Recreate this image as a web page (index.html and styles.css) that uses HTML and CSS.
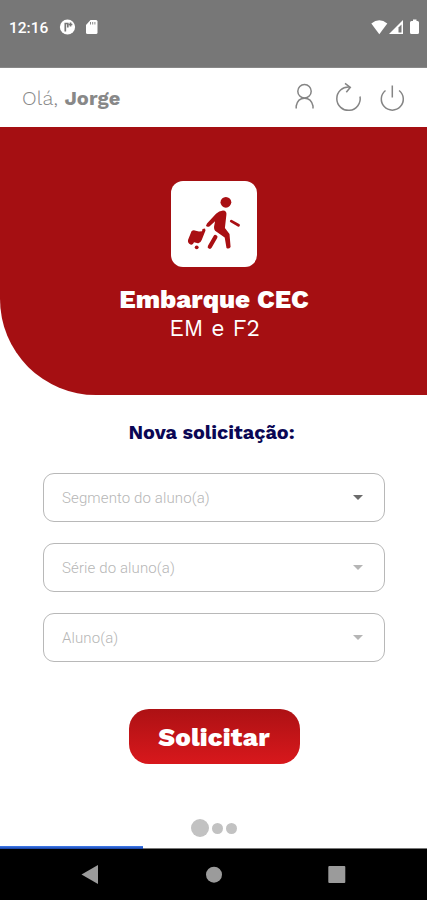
FILE: index.html
```html
<!DOCTYPE html>
<html lang="pt-BR">
<head>
<meta charset="utf-8">
<meta name="viewport" content="width=device-width, initial-scale=1">
<title>Embarque CEC</title>
<link rel="stylesheet" href="styles.css">
</head>
<body>
<div class="status">
  <span class="clock">12:16</span>
  <svg class="notices" width="40" height="18" viewBox="59 18 40 18">
    <circle cx="67.5" cy="27" r="7.6" fill="#fff"/>
    <path d="M65.300 31.500V23.500h2.500v4M70.500 22.500v4M68.800 24.500h3.600" fill="none" stroke="#777" stroke-width="1.7"/>
    <path d="M90.500 20H96q1.500 0 1.500 1.500V32.500q0 1.500-1.500 1.500H87.500Q86 34 86 32.500V25z" fill="#fff"/>
    <path d="M90.500 22v2.500M92.700 22v2.500M94.900 22v2.500" stroke="#888" stroke-width="1"/>
  </svg>
  <svg class="signals" width="51" height="18" viewBox="370 18 51 18">
    <path d="M371.300 23.500Q379.300 16.800 387.300 23.500L379.300 34.300z" fill="#fff"/>
    <path d="M389 34L403 20V34z" fill="#fff"/>
    <path d="M398.500 27.500L401.500 24.500V32.500H398.500z" fill="#777"/>
    <path d="M413 19.500h3.500v1.500h1q1.500 0 1.500 1.500V32.500q0 1.500-1.500 1.500h-6q-1.500 0-1.500-1.500V22.500q0-1.500 1.500-1.500h1.500z" fill="#fff"/>
  </svg>
</div>
<header class="topbar">
  <div class="hello">Olá, <b>Jorge</b></div>
  <svg class="actions" width="114" height="32" viewBox="292 82 114 32">
    <circle cx="304.500" cy="91.300" r="6.700"/>
    <path d="M296.200 108.500v-2.500q1.500-7.800 8.300-7.800t8.500 7.800v2.500"/>
    <path d="M360 96.500A11.700 11.700 0 1 1 349.500 87M345 83.300l5.300 4-4 5"/>
    <path d="M385.500 90.500a11 11 0 1 0 13.600 0M392.300 85.500v12"/>
  </svg>
</header>
<section class="hero">
  <div class="tile">
    <svg width="85" height="85" viewBox="171.500 181.500 85 85">
      <circle cx="226.400" cy="202.800" r="5.400" fill="#a90f13"/>
      <path d="M207.500 224L216.500 214.200Q219.500 211.200 223.500 211Q227.500 211.300 226.900 215.200L225.400 228.500L230 234.500L231.100 247.500Q229.300 250 227 248.500L225.200 238L215.600 231.200Q213.800 229 215 224.800L215.600 221.800L209.900 227Q207.300 227.900 206.500 226.200z" fill="#a90f13"/>
      <path d="M215.900 237.500L210.300 247.200" stroke="#a90f13" stroke-width="4.200" stroke-linecap="round"/>
      <path d="M231.800 221.600L239 225.700" stroke="#a90f13" stroke-width="2.800" stroke-linecap="round"/>
      <path d="M192 231.700Q193.800 230 196.300 231.200L199.500 232L202.500 231.800L203 229.600L205.500 229L206 231L204.200 235.500L202.200 240.500Q200.500 244.800 197.500 243.500L194.500 242.800Q193.500 245.800 191 245Q188 243.800 188.500 240.500z" fill="#a90f13"/>
      <circle cx="197.200" cy="247.800" r="1.900" fill="#a90f13"/>
    </svg>
  </div>
  <h1>Embarque CEC</h1>
  <p>EM e F2</p>
</section>
<main>
  <h2>Nova solicitação:</h2>
  <div class="field"><span>Segmento do aluno(a)</span><i class="caret active"></i></div>
  <div class="field"><span>Série do aluno(a)</span><i class="caret"></i></div>
  <div class="field"><span>Aluno(a)</span><i class="caret"></i></div>
  <button>Solicitar</button>
  <div class="dots"><i></i><i></i><i></i></div>
</main>
<div class="progress"><i></i></div>
<nav>
  <svg width="427" height="51" viewBox="0 849 427 51" fill="#9b9b9b">
    <path d="M81.500 874.500L98 865V884z"/>
    <circle cx="214" cy="874.700" r="8"/>
    <rect x="328.300" y="866" width="17" height="17" rx="1"/>
  </svg>
</nav>
</body>
</html>
```
FILE: styles.css
```css
* { box-sizing: border-box; }
body {
  margin: 0;
  width: 427px;
  height: 900px;
  display: flex;
  flex-direction: column;
  overflow: hidden;
  background: #fff;
  font-family: "Work Sans", Inter, sans-serif;
}
svg { display: block; flex: none; }
.status {
  height: 68px;
  background: #777;
  border-bottom: 1px solid #888;
  padding: 18px 6px 0 9px;
  display: flex;
  align-items: flex-start;
  color: #fff;
}
.clock {
  width: 50px;
  font: 500 15.500px/20px Roboto, sans-serif;
}
.signals { margin-left: auto; }
.topbar {
  height: 59px;
  padding: 0 21px 0 22px;
  display: flex;
  align-items: center;
  justify-content: space-between;
}
.hello {
  padding-top: 1px;
  color: #888;
  font-size: 20px;
  font-weight: 300;
  line-height: 24px;
  letter-spacing: 0.15px;
  white-space: nowrap;
}
.hello b { font-weight: 700; }
.actions { fill: none; stroke: #858585; stroke-width: 1.5; }
.hero {
  height: 268px;
  padding: 54px 0 0 1px;
  background: #a50f12;
  border-bottom-left-radius: 96px;
  display: flex;
  flex-direction: column;
  align-items: center;
  color: #fff;
}
.tile {
  width: 86px;
  height: 86px;
  border-radius: 12px;
  background: #fff;
}
h1, h2, p { margin: 0; white-space: nowrap; }
h1 {
  margin-top: 17px;
  font-size: 26px;
  font-weight: 800;
  line-height: 30px;
}
.hero p {
  padding-left: 1px;
  font-size: 23px;
  line-height: 30px;
}
main {
  height: 451px;
  display: flex;
  flex-direction: column;
  align-items: center;
}
h2 {
  margin: 25px 0 28px;
  padding-right: 4px;
  color: #0b0754;
  font-size: 19.800px;
  font-weight: 700;
  line-height: 25px;
}
.field {
  width: 342px;
  height: 49px;
  margin: 0 0 21px 1px;
  padding: 0 21px 0 18px;
  border: 1px solid #b8b8b8;
  border-radius: 11px;
  display: flex;
  align-items: center;
  justify-content: space-between;
  color: #b6b6b6;
  font: 300 15px/20px Roboto, sans-serif;
  letter-spacing: 0.12px;
}
.caret {
  border: 5.500px solid transparent;
  border-top-color: #b5b5b5;
  border-bottom: 0;
}
.caret.active { border-top-color: #6b6b6b; }
button {
  width: 171px;
  height: 55px;
  margin: 26px 0 0 1px;
  padding: 1px 0 0;
  border: 0;
  border-radius: 20px;
  background: linear-gradient(#ad1114, #d8181c);
  color: #fff;
  font: 800 26px/30px "Work Sans", Inter, sans-serif;
  letter-spacing: 0.2px;
}
.dots {
  display: flex;
  align-items: center;
  gap: 3px;
  margin-top: 55px;
}
.dots i {
  width: 11px;
  height: 11px;
  border-radius: 50%;
  background: #c2c2c2;
}
.dots i:first-child { width: 18px; height: 18px; }
.progress {
  height: 3px;
  border-bottom: 1px solid #777;
}
.progress i {
  display: block;
  width: 143px;
  height: 3px;
  background: linear-gradient(#3f7df0, #173f9f);
}
nav { height: 51px; background: #000; }
```
